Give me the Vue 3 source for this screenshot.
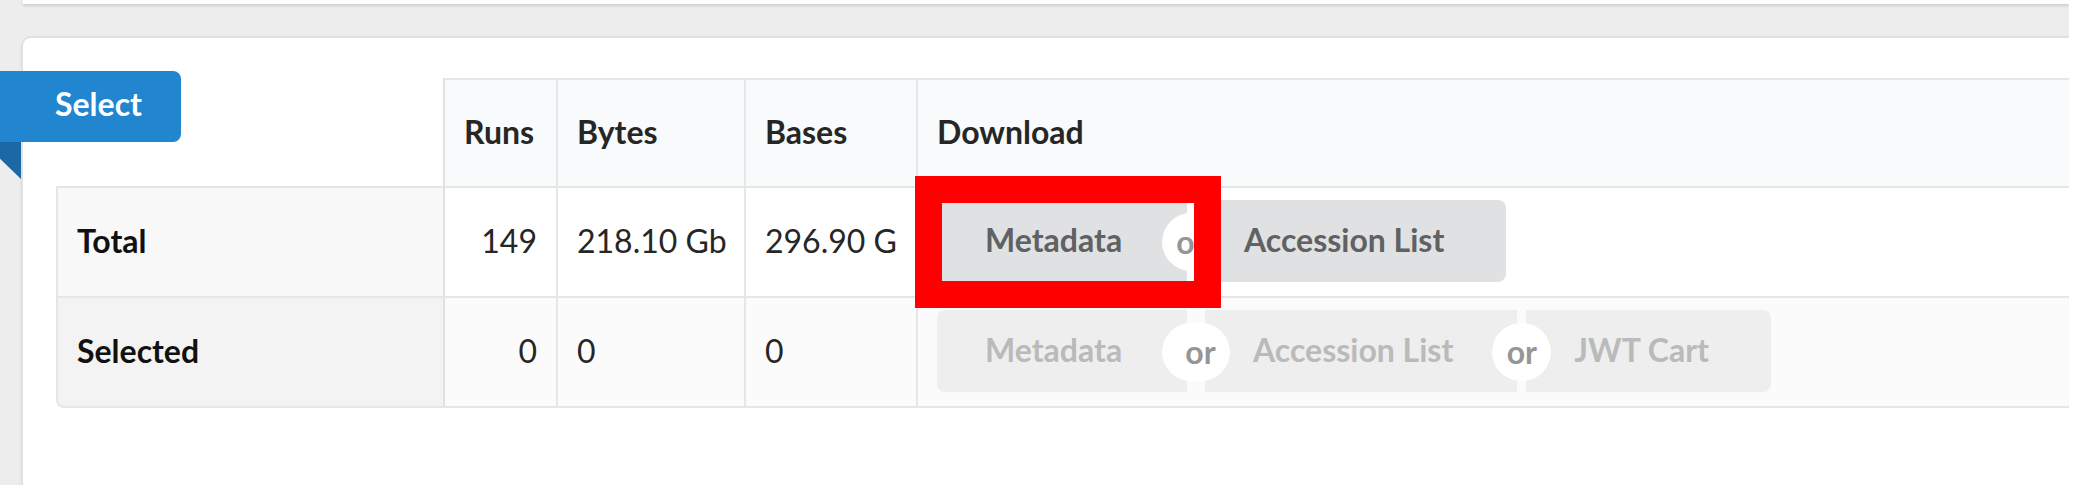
<script setup>
const headers = ['Runs', 'Bytes', 'Bases', 'Download']
const rows = [
  { name: 'Total', runs: '149', bytes: '218.10 Gb', bases: '296.90 G', actions: ['Metadata', 'Accession List'], disabled: false },
  { name: 'Selected', runs: '0', bytes: '0', bases: '0', actions: ['Metadata', 'Accession List', 'JWT Cart'], disabled: true },
]
</script>

<template>
  <div class="page">
    <div class="previous"></div>
    <section class="segment">
      <h2 class="ribbon">Select</h2>
      <table class="summary">
        <colgroup>
          <col class="col-name" />
          <col class="col-runs" />
          <col class="col-bytes" />
          <col class="col-bases" />
          <col />
        </colgroup>
        <thead>
          <tr>
            <td class="corner"></td>
            <th v-for="h in headers" :key="h" scope="col">{{ h }}</th>
          </tr>
        </thead>
        <tbody>
          <tr v-for="row in rows" :key="row.name">
            <th scope="row">{{ row.name }}</th>
            <td class="number">{{ row.runs }}</td>
            <td>{{ row.bytes }}</td>
            <td>{{ row.bases }}</td>
            <td class="download">
              <div class="buttons">
                <template v-for="(action, i) in row.actions" :key="action">
                  <span v-if="i > 0" class="or" :class="{ wide: row.disabled && i === 1 }"><span>or</span></span>
                  <button type="button" :disabled="row.disabled">{{ action }}</button>
                </template>
                <div v-if="!row.disabled" class="highlight"></div>
              </div>
            </td>
          </tr>
        </tbody>
      </table>
    </section>
  </div>
</template>

<style>
body {
  margin: 0;
  background: #fff;
}
</style>

<style scoped>
.page {
  box-sizing: border-box;
  height: calc(100vh - 5px);
  margin-right: 7px;
  overflow: hidden;
  background: #ededed;
  color: #262626;
  font: 32px/40px Lato, "Liberation Sans", sans-serif;
}
.previous {
  height: 4px;
  margin-left: 23px;
  background: #fff;
  box-shadow: 0 2px 3px #cfcfcf;
}
.segment {
  position: relative;
  box-sizing: border-box;
  height: 100%;
  margin: 34px 0 0 23px;
  padding: 40px 0 0 33px;
  border-radius: 8px 0 0 0;
  background: #fff;
  box-shadow: 0 0 0 2px #e0e0e0, 0 2px 4px 1px #dcdcdc;
}
.ribbon {
  position: absolute;
  top: 33px;
  left: -23px;
  box-sizing: border-box;
  margin: 0;
  padding: 13px 39px 18px 55px;
  border-radius: 0 8px 8px 0;
  background: #2185d0;
  color: #fff;
  font-size: 32px;
  line-height: 40px;
}
.ribbon::after {
  content: "";
  position: absolute;
  top: 100%;
  left: 0;
  width: 21px;
  height: 37px;
  background: #1a69a4;
  clip-path: polygon(0 0, 100% 0, 100% 100%, 0 45%);
}
.summary {
  width: 100%;
  table-layout: fixed;
  border-collapse: separate;
  border-spacing: 0;
}
.col-name {
  width: 389px;
}
.col-runs {
  width: 113px;
}
.col-bytes {
  width: 188px;
}
.col-bases {
  width: 172px;
}
th,
td {
  box-sizing: border-box;
  height: 110px;
  padding: 0 18px 2px 19px;
  border-right: 2px solid #e5e6e6;
  border-bottom: 2px solid #e5e6e6;
  text-align: left;
  white-space: nowrap;
}
thead th {
  border-top: 2px solid #e5e6e6;
  background: #f9fafb;
}
.corner {
  border-right-color: #e0e1e2;
}
tbody th {
  border-left: 2px solid #e5e6e6;
  border-right-color: #e0e1e2;
  background: #f8f8f8;
  color: #111;
}
tbody td {
  background: #fff;
}
tbody tr:last-child th {
  border-bottom-left-radius: 8px;
  background: #f3f3f3;
}
tbody tr:last-child td {
  background: #fbfbfb;
}
th:last-child,
td:last-child {
  border-right: 0;
}
.number {
  padding-right: 19px;
  text-align: right;
}
.buttons {
  position: relative;
  display: flex;
  width: max-content;
}
button {
  min-width: 250px;
  height: 82px;
  padding: 0 64px 2px 48px;
  border: 0;
  background: #e0e1e2;
  color: #606162;
  font: 700 32px/40px Lato, "Liberation Sans", sans-serif;
  text-align: left;
}
button:first-child {
  border-radius: 8px 0 0 8px;
}
button:last-of-type {
  min-width: 0;
  padding-right: 62px;
  border-radius: 0 8px 8px 0;
}
button:disabled {
  background: #eee;
  color: #b9baba;
}
.or {
  position: relative;
  width: 9px;
}
.or.wide {
  width: 18px;
}
.or span {
  position: absolute;
  z-index: 1;
  top: 13px;
  right: -25px;
  left: -25px;
  height: 58px;
  border-radius: 29px;
  background: #fff;
  color: #969696;
  font-weight: 700;
  line-height: 58px;
  text-align: center;
}
.or.wide span {
  padding-left: 9px;
}
.highlight {
  position: absolute;
  z-index: 2;
  top: -24px;
  left: -22px;
  box-sizing: border-box;
  width: 306px;
  height: 132px;
  border: 27px solid #f00;
}
</style>
